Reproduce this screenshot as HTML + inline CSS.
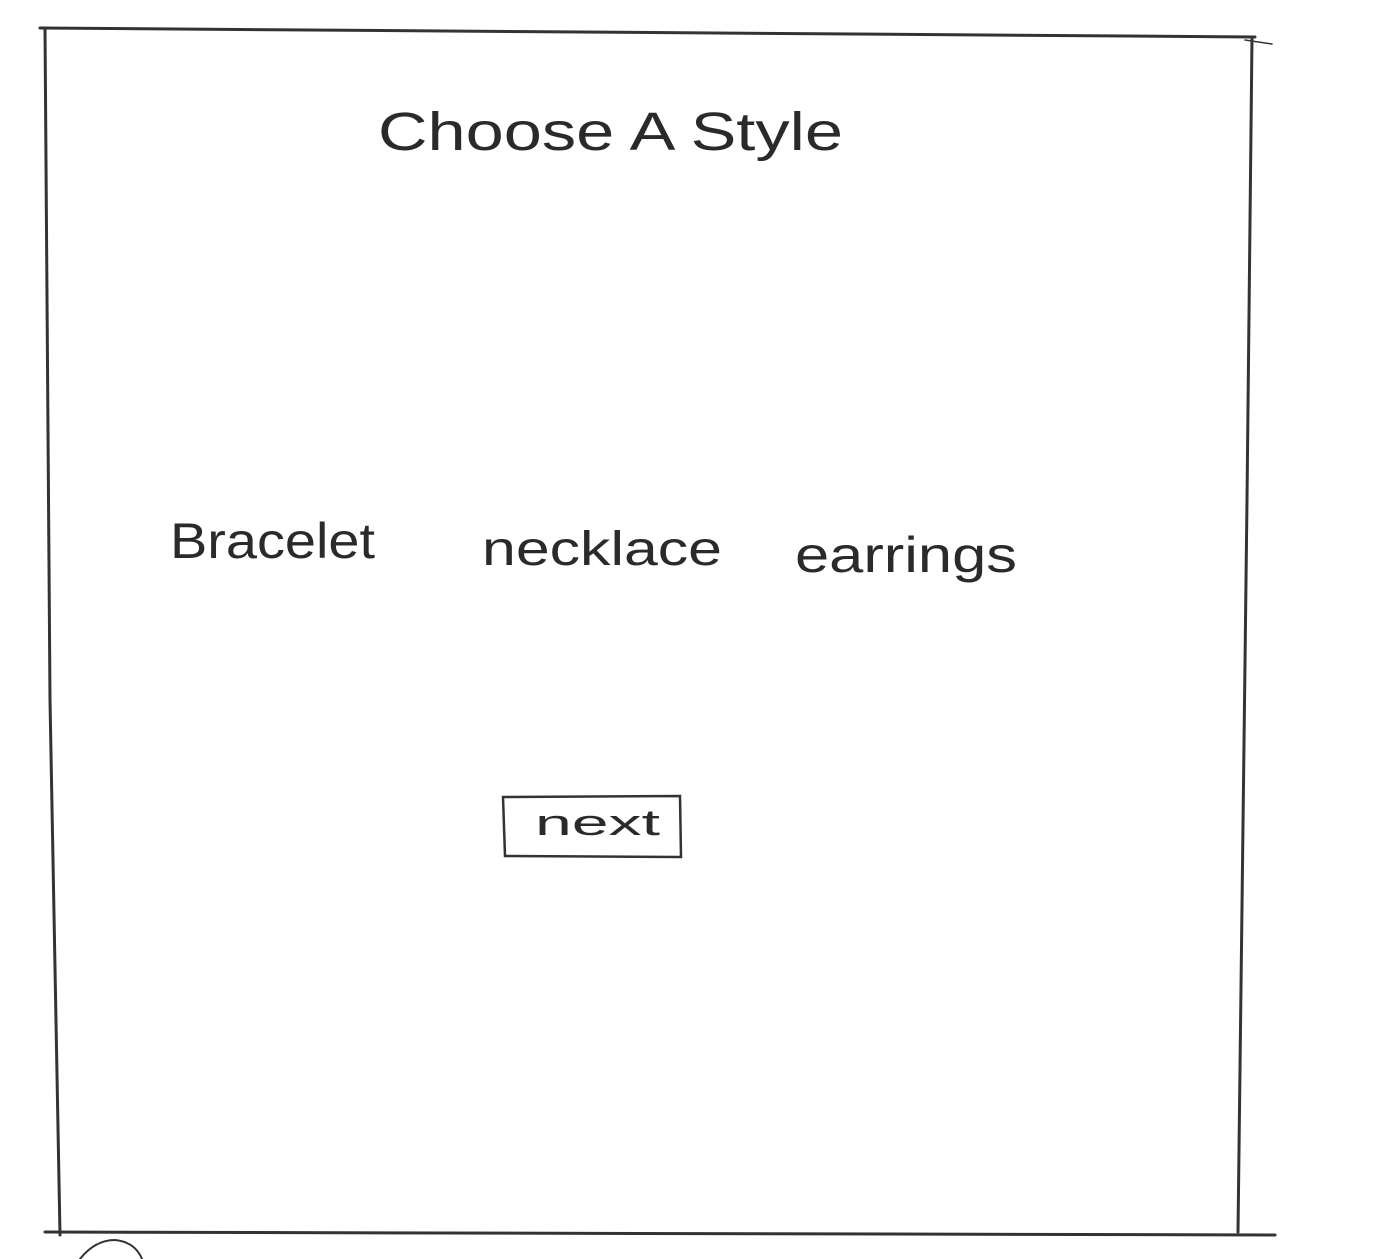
<!DOCTYPE html>
<html><head><meta charset="utf-8"><style>
html,body{margin:0;padding:0;background:#fff;}
body{width:1383px;height:1259px;position:relative;overflow:hidden;}
svg{position:absolute;left:0;top:0;}
.t{font-family:"Liberation Sans",sans-serif;fill:#2a2a2a;}
</style></head><body>
<svg width="1383" height="1259" viewBox="0 0 1383 1259">
<g stroke="#333" stroke-width="3" fill="none" stroke-linecap="round">
<path d="M40 28 L1255 37"/>
<path d="M1245 40 L1272 44" stroke-width="1.5"/>
<path d="M45 28 L50 700 L60 1235"/>
<path d="M1252 37 L1247 500 L1238 1232"/>
<path d="M45 1232 L1275 1235"/>
<path d="M80 1259 Q95 1240 115 1240 Q135 1242 142 1259" stroke-width="2"/>
<path d="M503 797 L680 796 L681 857 L505 856 Z" stroke-width="2.5"/>
</g>
<text class="t" x="378" y="150" font-size="54" textLength="465" lengthAdjust="spacingAndGlyphs" font-weight="300">Choose A Style</text>
<text class="t" x="170" y="558" font-size="50" textLength="205" lengthAdjust="spacingAndGlyphs">Bracelet</text>
<text class="t" x="482" y="565" font-size="48" textLength="240" lengthAdjust="spacingAndGlyphs">necklace</text>
<text class="t" x="795" y="572" font-size="50" textLength="222" lengthAdjust="spacingAndGlyphs">earrings</text>
<text class="t" x="535" y="835" font-size="36" textLength="125" lengthAdjust="spacingAndGlyphs">next</text>
</svg>
</body></html>
